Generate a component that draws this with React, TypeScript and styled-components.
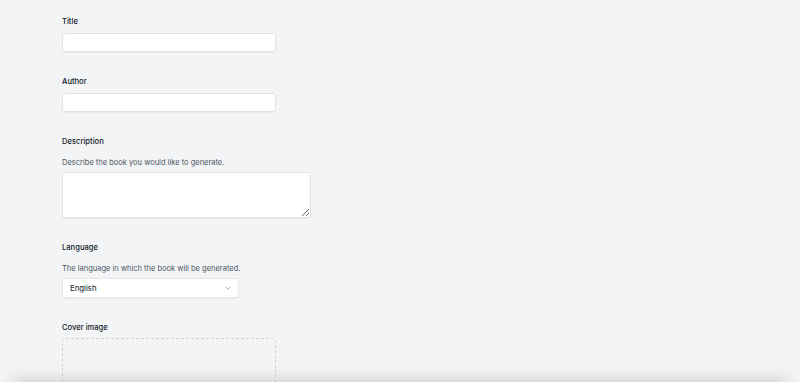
import styled, { createGlobalStyle } from "styled-components";

const GlobalStyle = createGlobalStyle`
  html, body {
    margin: 0;
    padding: 0;
    background: #f3f4f6;
    font-family: Inter, "Noto Sans", sans-serif;
    overflow: hidden;
  }
`

const Page = styled.form`
  display: flex;
  flex-direction: column;
  gap: 24px;
  padding: 16px 0 0 62px;
  min-height: 382px;
  box-sizing: border-box;
`

const Field = styled.div`
  display: flex;
  flex-direction: column;
`

const Label = styled.label<{ $hasHint?: boolean }>`
  font-size: 7.6px;
  line-height: 12px;
  font-weight: 500;
  color: #111827;
  margin-bottom: ${p => (p.$hasHint ? 0 : 4.5)}px;
`

const Hint = styled.p`
  font-size: 7.5px;
  line-height: 12px;
  color: #4b5563;
  margin: 8.5px 0 3.5px;
`

const Input = styled.input<{ $width: number }>`
  width: ${p => p.$width}px;
  height: 19.5px;
  box-sizing: border-box;
  background: #fff;
  border: 1px solid #e1e3e7;
  border-radius: 3px;
  box-shadow: 0 1px 1px rgba(0, 0, 0, 0.04);
  font-family: inherit;
  font-size: 8px;
  padding: 0 7px;
  outline: none;
`

const TextArea = styled.textarea`
  width: 249px;
  height: 46px;
  box-sizing: border-box;
  background: #fff;
  border: 1px solid #e1e3e7;
  border-radius: 3px;
  box-shadow: 0 1px 1px rgba(0, 0, 0, 0.04);
  font-family: inherit;
  font-size: 8px;
  padding: 4px 7px;
  outline: none;
  display: block;
`

const SelectBox = styled.div`
  width: 177px;
  height: 19.5px;
  box-sizing: border-box;
  display: flex;
  align-items: center;
  justify-content: space-between;
  background: #fff;
  border: 1px solid #e5e7eb;
  border-radius: 3px;
  box-shadow: 0 1px 1px rgba(0, 0, 0, 0.04);
  padding: 0 6px 0 7px;
  font-size: 7.8px;
  color: #111827;
`

const Dropzone = styled.div`
  width: 214px;
  height: 110px;
  box-sizing: border-box;
  border: 1px dashed #d1d5db;
  border-radius: 4px;
`

const BottomShade = styled.div`
  position: fixed;
  left: 12px;
  right: 12px;
  bottom: -20px;
  height: 20px;
  box-shadow: 0 -4px 16px rgba(0, 0, 0, 0.13);
  background: #e5e6e8;
`

export default function App() {
  return (
    <>
      <GlobalStyle />
      <Page>
        <Field>
          <Label>Title</Label>
          <Input $width={214} />
        </Field>
        <Field>
          <Label>Author</Label>
          <Input $width={214} />
        </Field>
        <Field>
          <Label $hasHint>Description</Label>
          <Hint>Describe the book you would like to generate.</Hint>
          <TextArea />
        </Field>
        <Field>
          <Label $hasHint>Language</Label>
          <Hint>The language in which the book will be generated.</Hint>
          <SelectBox>
            <span>English</span>
            <svg width="8" height="8" viewBox="0 0 20 20" fill="none">
              <path d="M5 8l5 5 5-5" stroke="#6b7280" strokeWidth="1.6" strokeLinecap="round" strokeLinejoin="round" />
            </svg>
          </SelectBox>
        </Field>
        <Field>
          <Label>Cover image</Label>
          <Dropzone />
        </Field>
      </Page>
      <BottomShade />
    </>
  )
}
